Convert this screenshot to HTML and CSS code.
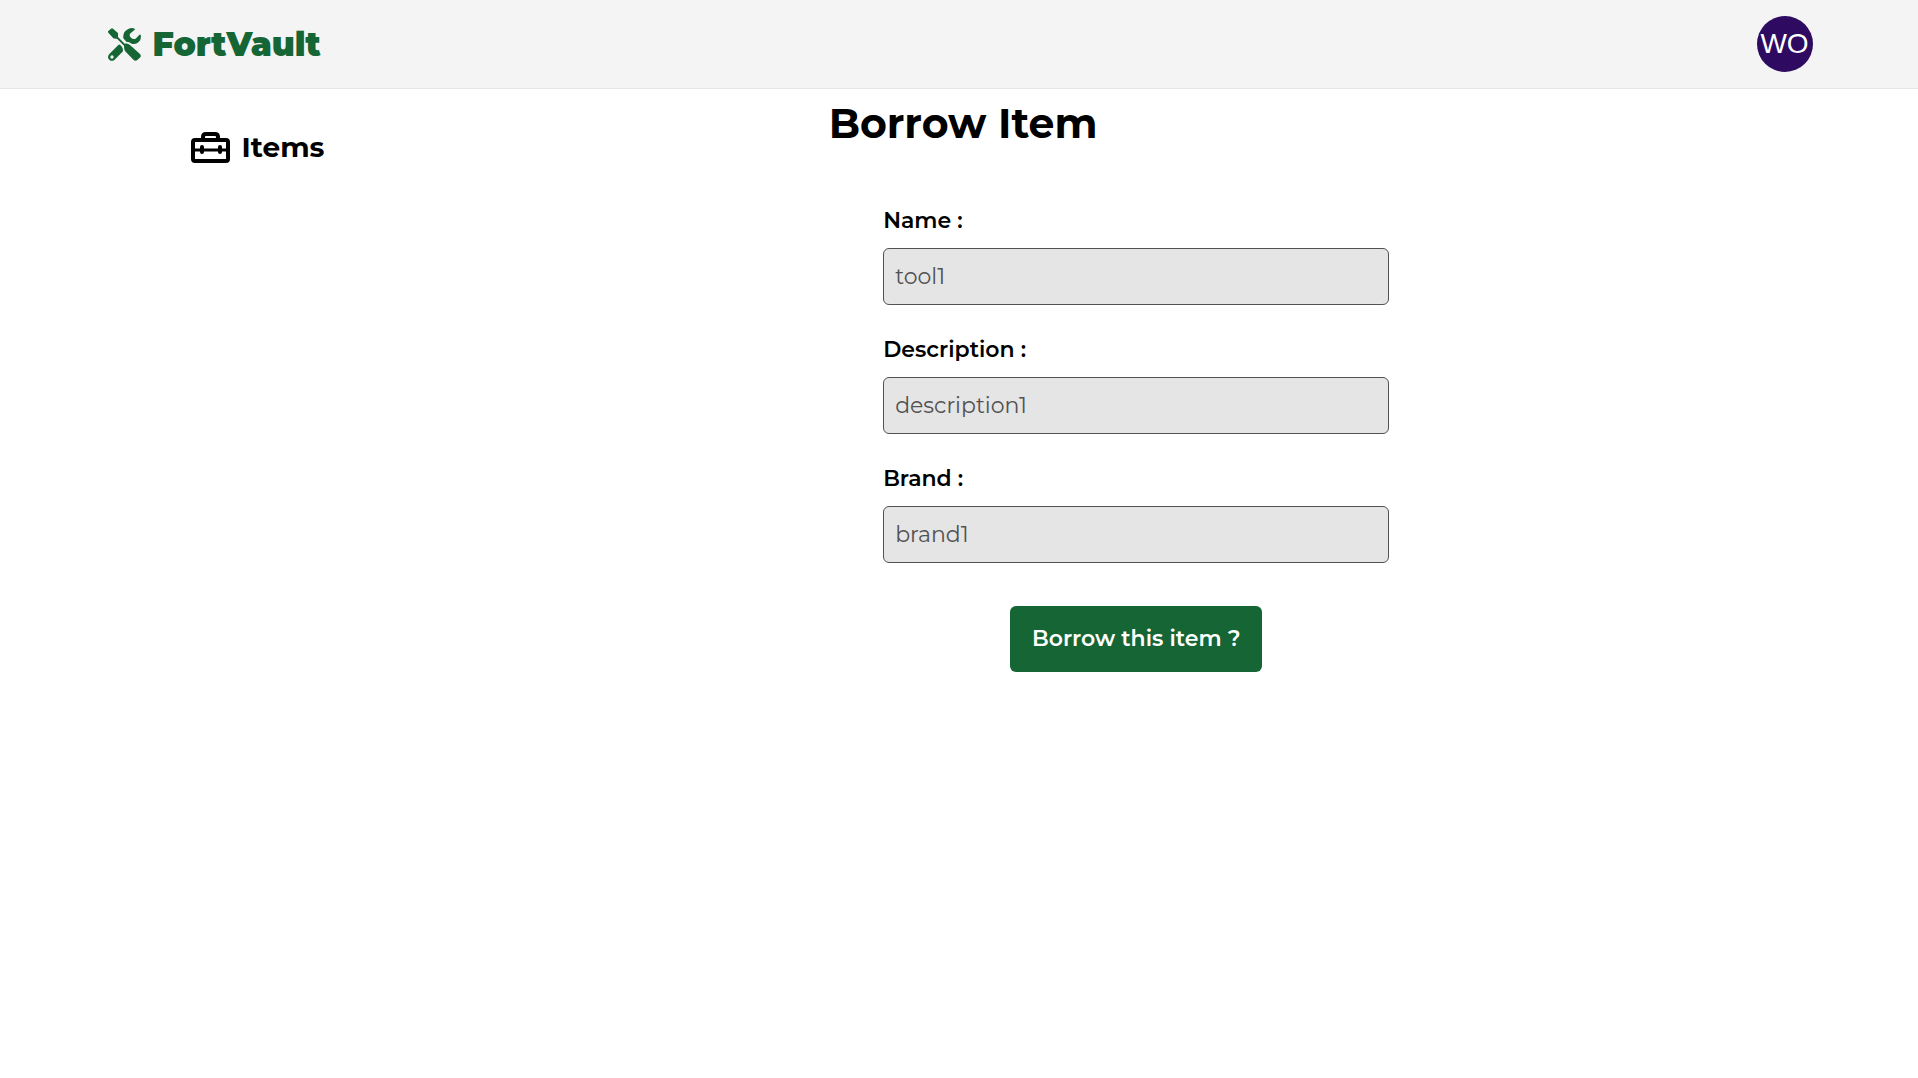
FILE: index.html
```html
<!DOCTYPE html>
<html lang="en">
<head>
  <meta charset="utf-8">
  <meta name="viewport" content="width=device-width, initial-scale=1">
  <title>FortVault</title>
  <link rel="stylesheet" href="styles.css">
</head>
<body>
  <header class="topbar">
    <a class="brand" href="#">
      <svg class="brand-icon" viewBox="0 0 99 99" aria-hidden="true">
        <path fill="currentColor" d="M1 14Q-1 11 1 9L9 2Q12-1 15 2L29 14Q31 17 30 22V27L50 47Q58 46 65 50L96 78Q100 83 97 88L87 97Q82 100 77 96L51 69Q48 64 48 53L27 32Q20 33 16 31Z"/>
        <path fill="currentColor" d="M80 2Q68-3 56 6Q44 14 46 31L55 41Q64 41 71 47Q83 51 92 42Q101 33 98 21Q96 18 93 22L83 32Q75 35 70 30Q63 25 66 17L80 5Q82 4 80 2Z"/>
        <path fill="currentColor" fill-rule="evenodd" d="M31 51Q34 48 37 51L42 57Q45 60 45 70L20 95Q11 102 4 95Q-4 87 4 78ZM12 82A5 5 0 1 0 12 92A5 5 0 1 0 12 82Z"/>
      </svg>
      <span>FortVault</span>
    </a>
    <button class="avatar" type="button" aria-label="Account WO">WO</button>
  </header>
  <div class="layout">
    <nav class="sidebar">
      <a class="nav-link" href="#">
        <svg class="nav-icon" viewBox="0 0 39 31" fill="none" stroke="currentColor" aria-hidden="true">
          <rect x="2" y="8" width="35" height="21" rx="2" stroke-width="4"/>
          <path stroke-width="4" d="M12 8V5Q12 2 15 2H24Q27 2 27 5V8"/>
          <path stroke-width="3" d="M3 18H36"/>
          <path stroke-width="4" stroke-linecap="round" d="M11 15V20M29 15V20"/>
        </svg>
        <span>Items</span>
      </a>
    </nav>
    <main class="content">
      <h1 class="title">Borrow Item</h1>
      <form class="form">
        <div class="field">
          <label for="name">Name :</label>
          <input id="name" type="text" value="tool1" disabled>
        </div>
        <div class="field">
          <label for="description">Description :</label>
          <input id="description" type="text" value="description1" disabled>
        </div>
        <div class="field">
          <label for="brand">Brand :</label>
          <input id="brand" type="text" value="brand1" disabled>
        </div>
        <button class="submit" type="button">Borrow this item ?</button>
      </form>
    </main>
  </div>
</body>
</html>
```
FILE: styles.css
```css
* {
  box-sizing: border-box;
}

body {
  margin: 0;
  background: #fff;
  color: #000;
  font-family: Montserrat, Inter, sans-serif;
}

.topbar {
  display: flex;
  align-items: center;
  justify-content: space-between;
  padding: 16px 5.5%;
  background: #f4f4f4;
  border-bottom: 1px solid #e5e5e5;
}

.brand {
  display: flex;
  align-items: center;
  gap: 11px;
  padding-left: 3px;
  color: #166534;
  font-size: 33px;
  font-weight: 900;
  line-height: 40px;
  text-decoration: none;
}

.brand-icon {
  width: 33px;
  height: 33px;
}

.avatar {
  width: 56px;
  height: 56px;
  padding: 0;
  border: 0;
  border-radius: 50%;
  background: #2e0a61;
  color: #fff;
  font-family: "Liberation Sans", Arial, sans-serif;
  font-size: 28px;
  line-height: 56px;
}

.layout {
  display: grid;
  grid-template-columns: 23% 1fr;
  padding: 0 9%;
}

.sidebar {
  padding: 38px 18px;
}

.nav-link {
  display: flex;
  align-items: center;
  gap: 12px;
  color: inherit;
  font-size: 28px;
  font-weight: 700;
  line-height: 40px;
  text-decoration: none;
}

.nav-icon {
  width: 39px;
  height: 31px;
}

.content {
  display: flex;
  flex-direction: column;
}

.title {
  margin: 6px 0 56px;
  padding-left: 24.3%;
  font-size: 41px;
  font-weight: 700;
  line-height: 56px;
}

.form {
  display: flex;
  flex-direction: column;
  gap: 31px;
  width: 41.8%;
  margin-left: 28.8%;
}

.field {
  display: flex;
  flex-direction: column;
  gap: 13px;
}

.field label {
  font-size: 22px;
  font-weight: 600;
  line-height: 28px;
}

.field input {
  width: 100%;
  height: 57px;
  padding: 0 11px;
  border: 1px solid #525252;
  border-radius: 6px;
  background: #e5e5e5;
  color: #525252;
  font-family: inherit;
  font-size: 22px;
}

.submit {
  align-self: center;
  margin-top: 12px;
  padding: 18px 22px;
  border: 0;
  border-radius: 6px;
  background: #166534;
  color: #fff;
  font-family: inherit;
  font-size: 22px;
  font-weight: 600;
  line-height: 30px;
}
```
